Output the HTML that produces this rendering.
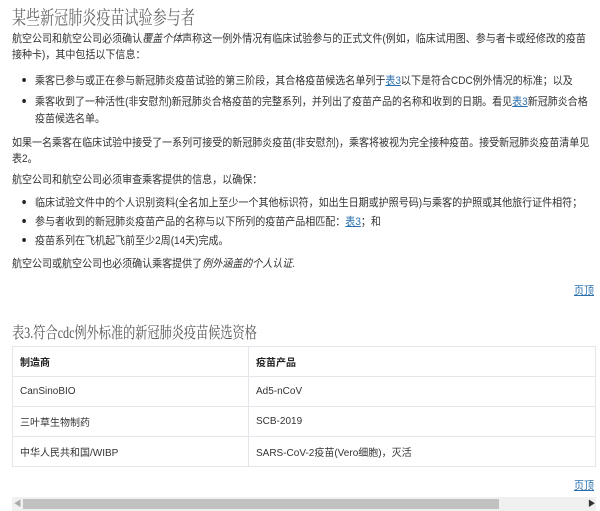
<!DOCTYPE html>
<html><head><meta charset="utf-8"><style>
body{margin:0;width:600px;height:511px;overflow:hidden;background:#fff;font-family:"Liberation Sans","Noto Sans CJK SC",sans-serif;font-size:11px;color:#333}
.t{position:absolute;white-space:nowrap;transform:scaleX(0.91);transform-origin:0 0}
h1{position:absolute;left:12px;top:3px;margin:0;font:19px "Liberation Serif","Noto Serif CJK SC",serif;color:#666;white-space:nowrap;transform:scaleX(0.74);transform-origin:0 0}
h2{position:absolute;left:12px;top:320px;margin:0;font:16px "Liberation Serif","Noto Serif CJK SC",serif;color:#555;white-space:nowrap;transform:scaleX(0.76);transform-origin:0 0}
a{color:#2a6fad;text-decoration:underline}
.b::before{content:"";position:absolute;left:-14px;top:6px;width:4px;height:4px;border-radius:50%;background:#222}
table{position:absolute;left:12px;top:346px;width:584px;border-collapse:collapse}
td{border:1px solid #e3e6ea;height:29px;padding:0 0 0 7px;font-size:10px}
</style></head><body>
<h1>某些新冠肺炎疫苗试验参与者</h1>
<div class="t" style="left:12px;top:30px">航空公司和航空公司必须确认<i>覆盖个体</i>声称这一例外情况有临床试验参与的正式文件(例如，临床试用图、参与者卡或经修改的疫苗</div>
<div class="t" style="left:12px;top:46px">接种卡)，其中包括以下信息：</div>
<div class="t b" style="left:35px;top:72px">乘客已参与或正在参与新冠肺炎疫苗试验的第三阶段，其合格疫苗候选名单列于<a>表3</a>以下是符合CDC例外情况的标准；以及</div>
<div class="t b" style="left:35px;top:93px">乘客收到了一种活性(非安慰剂)新冠肺炎合格疫苗的完整系列，并列出了疫苗产品的名称和收到的日期。看见<a>表3</a>新冠肺炎合格</div>
<div class="t" style="left:35px;top:110px">疫苗候选名单。</div>
<div class="t" style="left:12px;top:134px">如果一名乘客在临床试验中接受了一系列可接受的新冠肺炎疫苗(非安慰剂)，乘客将被视为完全接种疫苗。接受新冠肺炎疫苗清单见</div>
<div class="t" style="left:12px;top:150px">表2。</div>
<div class="t" style="left:12px;top:171px">航空公司和航空公司必须审查乘客提供的信息，以确保：</div>
<div class="t b" style="left:35px;top:194px">临床试验文件中的个人识别资料(全名加上至少一个其他标识符，如出生日期或护照号码)与乘客的护照或其他旅行证件相符；</div>
<div class="t b" style="left:35px;top:213px">参与者收到的新冠肺炎疫苗产品的名称与以下所列的疫苗产品相匹配：<a>表3</a>；和</div>
<div class="t b" style="left:35px;top:232px">疫苗系列在飞机起飞前至少2周(14天)完成。</div>
<div class="t" style="left:12px;top:255px">航空公司或航空公司也必须确认乘客提供了<i>例外涵盖的个人认证</i>.</div>
<div class="t" style="left:574px;top:282px"><a>页顶</a></div>
<h2>表3.符合cdc例外标准的新冠肺炎疫苗候选资格</h2>
<table>
<tr><td style="width:228px;font-weight:bold;color:#222">制造商</td><td style="font-weight:bold;color:#222">疫苗产品</td></tr>
<tr><td>CanSinoBIO</td><td>Ad5-nCoV</td></tr>
<tr><td>三叶草生物制药</td><td>SCB-2019</td></tr>
<tr><td>中华人民共和国/WIBP</td><td>SARS-CoV-2疫苗(Vero细胞)，灭活</td></tr>
</table>
<div class="t" style="left:574px;top:477px"><a>页顶</a></div>
<div style="position:absolute;left:12px;top:497px;width:584px;height:14px;background:#f0f0f0"></div>
<div style="position:absolute;left:23px;top:499px;width:476px;height:10px;background:#c1c1c1"></div>
<div class="t" style="left:14px;top:498px;font-size:8px;color:#aaa">◀</div>
<div class="t" style="left:588px;top:498px;font-size:8px;color:#333">▶</div>
</body></html>
